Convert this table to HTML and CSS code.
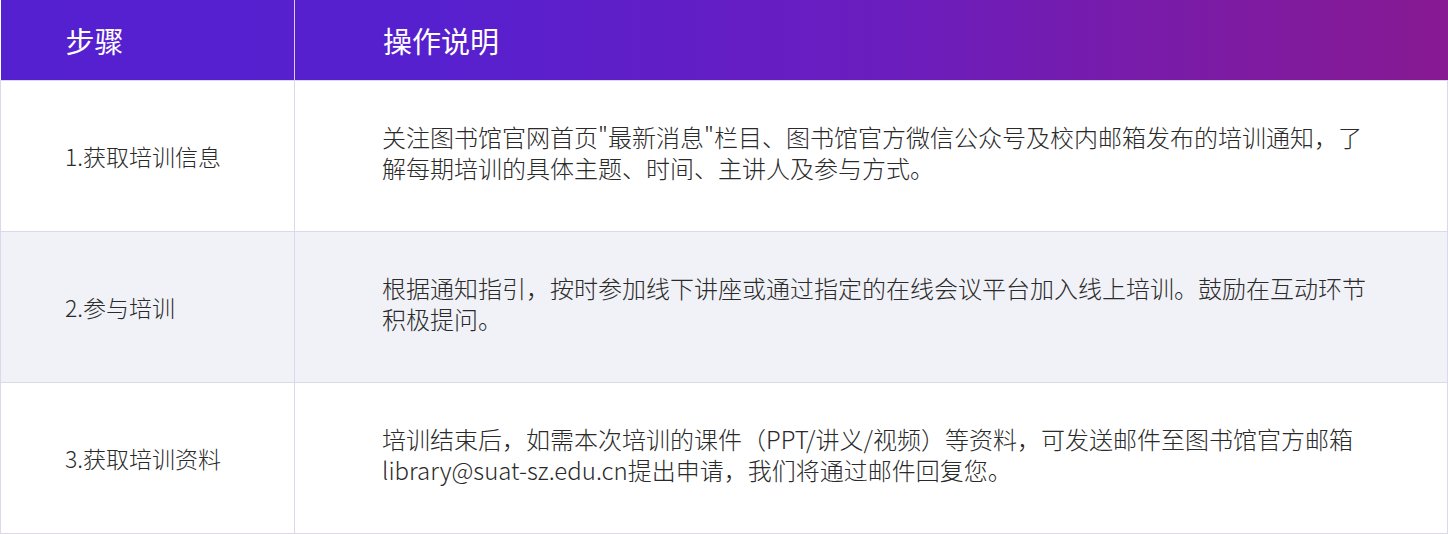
FILE: index.html
```html
<!DOCTYPE html>
<html lang="zh-CN">
<head>
<meta charset="utf-8">
<title>培训流程</title>
<link rel="stylesheet" href="styles.css">
</head>
<body>
<table class="steps">
  <thead>
    <tr>
      <th class="col-step">步骤</th>
      <th class="col-desc">操作说明</th>
    </tr>
  </thead>
  <tbody>
    <tr>
      <td class="col-step">1.获取培训信息</td>
      <td class="col-desc"><div class="desc">关注图书馆官网首页"最新消息"栏目、图书馆官方微信公众号及校内邮箱发布的培训通知，了解每期培训的具体主题、时间、主讲人及参与方式。</div></td>
    </tr>
    <tr class="alt">
      <td class="col-step">2.参与培训</td>
      <td class="col-desc"><div class="desc">根据通知指引，按时参加线下讲座或通过指定的在线会议平台加入线上培训。鼓励在互动环节积极提问。</div></td>
    </tr>
    <tr>
      <td class="col-step">3.获取培训资料</td>
      <td class="col-desc"><div class="desc">培训结束后，如需本次培训的课件（PPT/讲义/视频）等资料，可发送邮件至图书馆官方邮箱library@suat-sz.edu.cn提出申请，我们将通过邮件回复您。</div></td>
    </tr>
  </tbody>
</table>
</body>
</html>
```

FILE: styles.css
```css
html, body {
  margin: 0;
  padding: 0;
  background: #ffffff;
}

body {
  font-family: "Noto Sans CJK SC", "Noto Sans", sans-serif;
  color: #2a2a2a;
  font-weight: 300;
}

.steps {
  width: 1448px;
  border-collapse: collapse;
  table-layout: fixed;
}

.steps thead tr {
  background: linear-gradient(90deg, #5520d0 0%, #5720cf 30%, #6a1dbf 60%, #881a92 100%);
}

.steps th {
  height: 80px;
  padding: 0;
  color: #ffffff;
  font-size: 29px;
  font-weight: 400;
  text-align: left;
  vertical-align: middle;
  border-bottom: 1px solid #dcd8ea;
}

.steps th.col-step {
  width: 294px;
  padding-left: 65px;
  border-right: 1px solid #d6cfec;
  box-sizing: border-box;
}

.steps th.col-desc {
  padding-left: 88px;
}

.steps td {
  height: 150px;
  padding: 0;
  font-size: 23px;
  vertical-align: middle;
  border: 1px solid #dcd8ea;
  border-top: none;
}

.steps td.col-step {
  padding-left: 64px;
}

.steps td.col-desc {
  padding-left: 87px;
  font-size: 24px;
  line-height: 31px;
}

.desc {
  width: 994px;
  margin-bottom: 8px;
}

.steps tr.alt td {
  background: #f1f2f7;
}
```
